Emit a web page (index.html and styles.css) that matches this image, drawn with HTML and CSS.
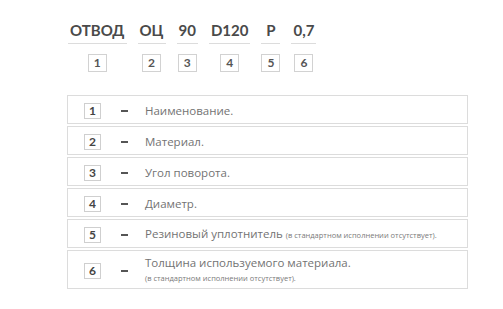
FILE: index.html
```html
<!DOCTYPE html>
<html lang="ru">
<head>
<meta charset="utf-8">
<link rel="stylesheet" href="styles.css">
</head>
<body>
<div class="page">
  <div class="code">
    <div class="part"><div class="label">ОТВОД</div><div class="num">1</div></div>
    <div class="part"><div class="label">ОЦ</div><div class="num">2</div></div>
    <div class="part"><div class="label">90</div><div class="num">3</div></div>
    <div class="part"><div class="label">D120</div><div class="num">4</div></div>
    <div class="part"><div class="label">P</div><div class="num">5</div></div>
    <div class="part"><div class="label">0,7</div><div class="num">6</div></div>
  </div>
  <div class="legend">
    <div class="row"><span class="box">1</span><span class="dash"></span><span class="text">Наименование.</span></div>
    <div class="row"><span class="box">2</span><span class="dash"></span><span class="text">Материал.</span></div>
    <div class="row"><span class="box">3</span><span class="dash"></span><span class="text">Угол поворота.</span></div>
    <div class="row"><span class="box">4</span><span class="dash"></span><span class="text">Диаметр.</span></div>
    <div class="row"><span class="box">5</span><span class="dash"></span><span class="text">Резиновый уплотнитель <small class="note">(в стандартном исполнении отсутствует).</small></span></div>
    <div class="row tall"><span class="box">6</span><span class="dash"></span><span class="text">Толщина используемого материала.<br><small class="note">(в стандартном исполнении отсутствует).</small></span></div>
  </div>
</div>
</body>
</html>
```

FILE: styles.css
```css
html, body {
  margin: 0;
  padding: 0;
  background: #ffffff;
}
body {
  font-family: "Open Sans", "Liberation Sans", sans-serif;
  color: #6b6b6b;
}
.page {
  padding: 21px 0 0 67px;
  width: 401px;
}
.code {
  display: flex;
  gap: 11px;
  padding-left: 1px;
}
.part {
  display: flex;
  flex-direction: column;
  align-items: center;
}
.label {
  font-family: "Lato", "Open Sans", sans-serif;
  font-weight: 700;
  font-size: 15px;
  line-height: 18px;
  color: #4a4a4a;
  padding: 0 2px 4px;
  border-bottom: 1px solid #dcdcdc;
  align-self: stretch;
  text-align: center;
}
.num {
  margin-top: 10px;
  width: 19px;
  height: 18px;
  box-sizing: border-box;
  border: 1px solid #d2d2d2;
  font-family: "Lato", sans-serif;
  font-weight: 700;
  font-size: 12px;
  line-height: 16px;
  text-align: center;
  color: #555;
}
.legend {
  margin-top: 23px;
  display: flex;
  flex-direction: column;
  gap: 2px;
}
.row {
  display: flex;
  align-items: center;
  height: 29px;
  box-sizing: border-box;
  border: 1px solid #dcdcdc;
  padding: 2px 0 0 16px;
}
.row.tall {
  height: 39px;
}
.box {
  width: 17px;
  height: 16px;
  box-sizing: border-box;
  border: 1px solid #cfcfcf;
  font-family: "Lato", sans-serif;
  font-weight: 700;
  font-size: 12px;
  line-height: 14px;
  text-align: center;
  color: #444;
  flex: none;
}
.dash {
  margin-left: 20px;
  width: 7px;
  height: 2px;
  background: #555;
  flex: none;
}
.text {
  margin-left: 17px;
  font-size: 11.5px;
  line-height: 14px;
  color: #737373;
  margin-top: 0;
}
.note {
  font-size: 7.5px;
  color: #7a7a7a;
}
```
